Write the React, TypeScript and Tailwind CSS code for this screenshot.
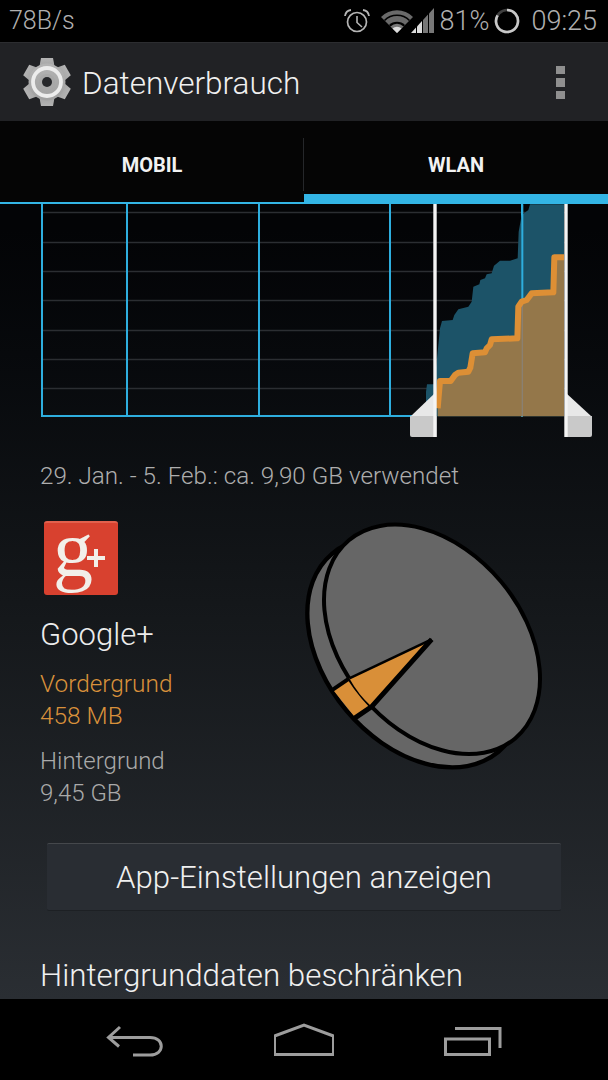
const GRID_Y = [212, 242, 271, 300, 330, 359, 388];
const CHART_X = [42, 127, 259, 390, 522];

// zoom-crop coordinates, scaled into place by the group transform
const BLUE_AREA =
  "M108 664 L108 590 L111 568 L132 568 L140 500 L150 400 L156 378 L188 375 L193 360 L205 343 L235 335 L245 320 L250 275 L268 268 L271 255 L285 250 L290 238 L305 235 L312 212 L330 197 L360 197 L383 190 L386 110 L395 60 L415 45 L420 28 L522 28 L522 664 Z";
const ORANGE_LINE =
  "M143 640 L150 558 L182 558 L195 540 L205 533 L235 530 L241 518 L248 475 L285 472 L290 460 L300 450 L305 433 L382 430 L385 335 L395 320 L410 315 L425 295 L490 292 L493 187 L522 187";

function SignalIcons() {
  return (
    <svg width="54" height="28" viewBox="0 0 54 28" className="ml-[10px]">
      <path d="M16 26 L0 10 A22.6 22.6 0 0 1 32 10 Z" fill="#6a6a6a" />
      <path d="M3.5 13.5 A17.6 17.6 0 0 1 28.5 13.5" fill="none" stroke="#000" strokeWidth="1.6" />
      <path d="M16 26 L8 18 A11.3 11.3 0 0 1 24 18 Z" fill="#000" />
      <path d="M16 26 L9.5 19.5 A9.2 9.2 0 0 1 22.5 19.5 Z" fill="#777" />
      <path d="M16 26 L11.5 21.5 A6.4 6.4 0 0 1 20.5 21.5 Z" fill="#ddd" />
      <path d="M30 26 L35 20.5 L35 26 Z" fill="#ddd" />
      <path d="M36 19.5 L41 14 L41 26 L36 26 Z" fill="#ddd" />
      <path d="M42 13 L47 7.5 L47 26 L42 26 Z" fill="#777" />
      <path d="M48 6.5 L53 1 L53 26 L48 26 Z" fill="#777" />
    </svg>
  );
}

function AlarmIcon() {
  return (
    <svg width="28" height="28" viewBox="0 0 28 28" fill="none" stroke="#b5b5b5">
      <circle cx="14" cy="15" r="9.5" strokeWidth="1.7" />
      <path d="M14 9 L14 15.5 L19 20" strokeWidth="1.6" />
      <path d="M2 9 A7 7 0 0 1 8 3" strokeWidth="1.8" />
      <path d="M26 9 A7 7 0 0 0 20 3" strokeWidth="1.8" />
    </svg>
  );
}

function BatteryRing() {
  return (
    <svg width="26" height="26" viewBox="0 0 26 26" fill="none" className="ml-[5px]">
      <circle cx="13" cy="13" r="11" stroke="#3f3f3f" strokeWidth="2.6" />
      <path d="M13 2 A11 11 0 1 1 3.6 7.3" stroke="#c8c8c8" strokeWidth="2.6" />
    </svg>
  );
}

function GearIcon() {
  return (
    <svg width="50" height="50" viewBox="0 0 50 50">
      <defs>
        <linearGradient id="gear" x1="0" y1="0" x2="0" y2="1">
          <stop offset="0" stopColor="#b4b4b4" />
          <stop offset="1" stopColor="#a0a0a0" />
        </linearGradient>
      </defs>
      {[0, 60, 120, 180, 240, 300].map((a) => (
        <path key={a} d="M19 1 L31 1 L33 12 L17 12 Z" fill="url(#gear)" transform={`rotate(${a} 25 25)`} />
      ))}
      <circle cx="25" cy="25" r="18.5" fill="url(#gear)" />
      <circle cx="25" cy="25" r="14" fill="none" stroke="#ececec" strokeWidth="3.8" />
      <circle cx="25" cy="25" r="8" fill="#a8a8a8" />
      <circle cx="25" cy="25" r="5" fill="#26272a" />
    </svg>
  );
}

function UsageChart() {
  return (
    <svg width="608" height="236" viewBox="0 204 608 236" className="block">
      {GRID_Y.map((y) => (
        <line key={y} x1="43" x2="566" y1={y + 0.5} y2={y + 0.5} stroke="#2b2e32" strokeWidth="1.4" />
      ))}
      {CHART_X.map((x) => (
        <line key={x} x1={x} x2={x} y1="204" y2="417" stroke="#2eaede" strokeWidth="2" />
      ))}
      <line x1="41" x2="436" y1="416" y2="416" stroke="#2eaede" strokeWidth="2" />
      <g transform="translate(390 195) scale(0.33333)">
        <path d={BLUE_AREA} fill="#1c5368" />
        <line x1="397" x2="397" y1="28" y2="320" stroke="#2eaede" strokeWidth="6" />
        <path d={`${ORANGE_LINE} L522 664 L143 664 Z`} fill="#94774a" />
        <line x1="397" x2="397" y1="320" y2="664" stroke="#8a8172" strokeWidth="4" />
        <path d={ORANGE_LINE} fill="none" stroke="#dd8f35" strokeWidth="18" strokeLinejoin="round" />
      </g>
      <path d="M435 393 L435 416 L411 416 Z" fill="#e8e8e8" />
      <path d="M566 393 L566 416 L591 416 Z" fill="#e8e8e8" />
      <path d="M410 416 H436.5 V437 H412 Q410 437 410 435 Z" fill="#c9c9c9" />
      <path d="M565 416 H592 V435 Q592 437 590 437 H565 Z" fill="#c9c9c9" />
      <line x1="435" x2="435" y1="204" y2="437" stroke="#f4f4f4" strokeWidth="3.4" />
      <line x1="566" x2="566" y1="204" y2="437" stroke="#f4f4f4" strokeWidth="3.4" />
    </svg>
  );
}

function GooglePlusIcon() {
  return (
    <div className="relative flex h-[74px] w-[74px] items-center justify-center rounded-[3px] border-t-2 border-[#e2604d] bg-[#d8412f]">
      <span className="-mt-[20px] -ml-[16px] font-['Liberation_Serif',serif] text-[80px] leading-none text-[#f2efe9]">g</span>
      <span className="absolute top-[33px] left-[43px] h-[4px] w-[18px] bg-[#f2efe9]" />
      <span className="absolute top-[26px] left-[50px] h-[18px] w-[4px] bg-[#f2efe9]" />
    </div>
  );
}

function PieChart() {
  return (
    <svg width="270" height="270" viewBox="0 0 810 810" className="shrink-0">
      <ellipse cx="376" cy="428" rx="388" ry="270" transform="rotate(50 376 428)" fill="#666" stroke="#000" strokeWidth="13" />
      <path d="M178 505 L130 541 L195 622 L245 590 Z" fill="#d98f38" />
      <path d="M178 505 L125 541" stroke="#000" strokeWidth="12" />
      <ellipse cx="426" cy="388" rx="388" ry="270" transform="rotate(50 426 388)" fill="#666" stroke="#000" strokeWidth="12" />
      <path d="M178 505 L425 388 L245 590 Q205 555 178 505 Z" fill="#d98f38" />
      <path d="M178 505 L425 388" stroke="#000" strokeWidth="8" />
      <path d="M425 388 L245 590 L192 626" fill="none" stroke="#000" strokeWidth="15" />
    </svg>
  );
}

function NavBar() {
  return (
    <div className="flex h-[81px] shrink-0 justify-center gap-[109px] bg-black pt-[24px]">
      <svg width="60" height="36" viewBox="105 1024 60 36" fill="none" stroke="#9d9d9d" strokeWidth="3">
        <path d="M120 1028 L108.5 1038.5 L119 1047.5" />
        <path d="M108.5 1038.5 H150 C165 1038.5 165 1056 150 1056 H133" />
      </svg>
      <svg width="60" height="36" viewBox="274 1024 60 36" fill="none" stroke="#9d9d9d" strokeWidth="3">
        <path d="M274.5 1055.5 V1037 L304 1026 L333.5 1037 V1055.5 Z" />
      </svg>
      <svg width="60" height="36" viewBox="445 1024 60 36" fill="none" stroke="#9d9d9d" strokeWidth="3">
        <rect x="447.5" y="1040" width="44" height="15.5" />
        <path d="M457 1029.5 H502 V1049" />
      </svg>
    </div>
  );
}

export default function App() {
  return (
    <div className="flex h-[1080px] w-[608px] flex-col overflow-hidden bg-black font-['Roboto',sans-serif]">
      <div className="flex h-[42px] shrink-0 items-center pr-[11px] pl-[9px] font-light text-[#b0b0b0]">
        <span className="text-[25px]">78B/s</span>
        <div className="ml-auto flex items-center text-[27px]">
          <AlarmIcon />
          <SignalIcons />
          <span className="ml-[5px]">81%</span>
          <BatteryRing />
          <span className="ml-[11px]">09:25</span>
        </div>
      </div>

      <div className="flex h-[79px] shrink-0 items-center border-t border-[#2c2d30] bg-[#212225] pr-[43px] pl-[22px]">
        <GearIcon />
        <span className="mt-[4px] ml-[10px] text-[31.5px] font-light text-[#f0f0f0]">Datenverbrauch</span>
        <div className="ml-auto flex flex-col gap-[4px]">
          <span className="h-[8px] w-[9px] bg-[#8f8f8f]" />
          <span className="h-[9px] w-[9px] bg-[#8f8f8f]" />
          <span className="h-[8px] w-[9px] bg-[#8f8f8f]" />
        </div>
      </div>

      <div className="relative flex h-[83px] shrink-0 bg-[#050505] pt-[3px] text-[20px] font-bold text-[#f2f2f2]">
        <div className="flex flex-1 items-center justify-center border-b-2 border-[#33b5e5] pt-[4px]">MOBIL</div>
        <div className="flex w-[304px] items-center justify-center border-b-[10px] border-[#33b5e5] pt-[12px]">WLAN</div>
        <span className="absolute top-[17px] left-[303px] h-[53px] w-px bg-[#25272a]" />
      </div>

      <div className="min-h-0 flex-1 overflow-hidden bg-gradient-to-b from-[#030406] from-[3%] via-[#14171a] via-[50%] to-[#2a2e33]">
        <UsageChart />
        <p className="mt-[20px] pl-[40px] text-[24.2px] leading-[32px] font-light text-[#aeaeae]">
          29. Jan. - 5. Feb.: ca. 9,90 GB verwendet
        </p>
        <div className="mt-[18px] flex h-[333px]">
          <div className="w-[249px] pt-[11px] pl-[44px]">
            <GooglePlusIcon />
            <p className="mt-[21px] -ml-[4px] text-[31px] leading-[38px] font-light text-[#ececec]">Google+</p>
            <div className="mt-[14px] -ml-[4px] text-[24.4px] leading-[32px] font-light text-[#d9913b]">
              <p>Vordergrund</p>
              <p>458 MB</p>
            </div>
            <div className="mt-[13px] -ml-[4px] text-[24px] leading-[32px] font-light text-[#aaaaaa]">
              <p>Hintergrund</p>
              <p>9,45 GB</p>
            </div>
          </div>
          <div className="ml-[41px]">
            <PieChart />
          </div>
        </div>
        <div className="ml-[47px] flex h-[68px] w-[514px] items-center justify-center rounded-[2px] border-t border-b border-t-[#45484c] border-b-[#1d2024] bg-[#292d33] pt-[2px] text-[31.2px] font-light text-[#f0f0f0]">
          App-Einstellungen anzeigen
        </div>
        <p className="mt-[45px] pl-[40px] text-[31.3px] leading-[40px] font-light text-[#f0f0f0]">Hintergrunddaten beschränken</p>
      </div>

      <NavBar />
    </div>
  );
}
